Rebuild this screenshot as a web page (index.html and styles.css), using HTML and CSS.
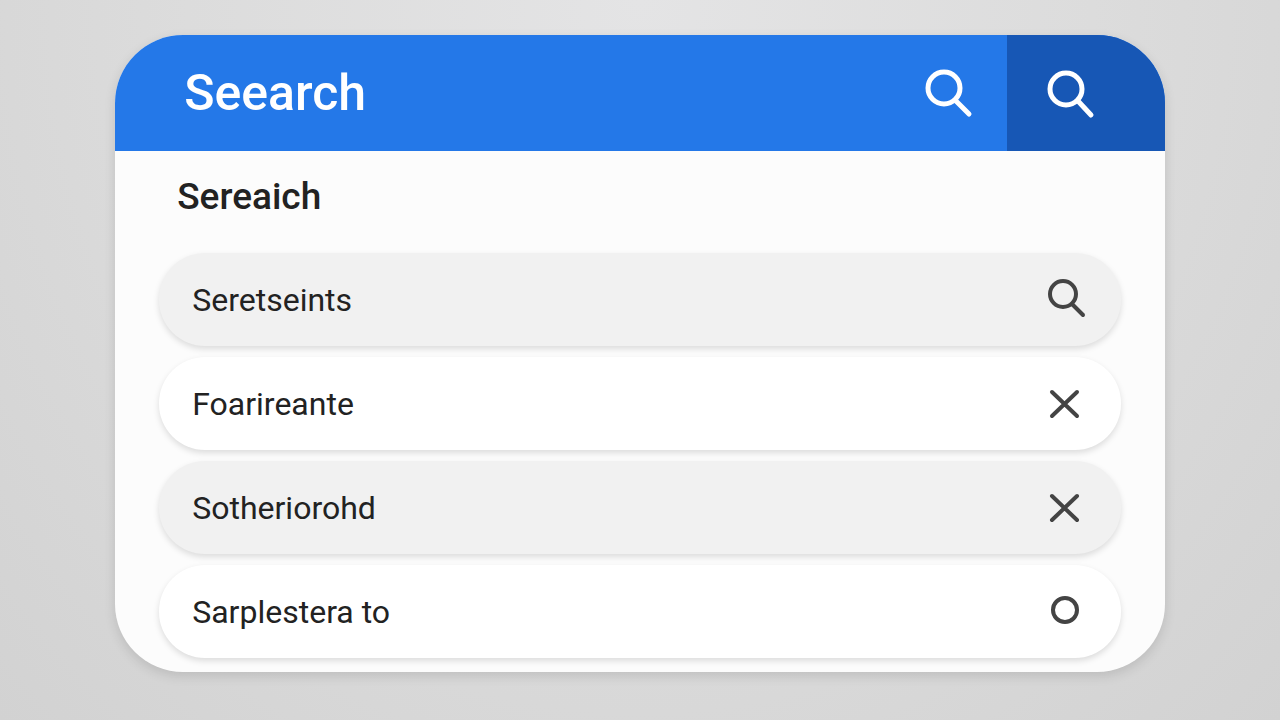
FILE: index.html
```
<!DOCTYPE html>
<html lang="en">
<head>
    <meta charset="UTF-8">
    <meta name="viewport" content="width=device-width, initial-scale=1.0">
    <title>Seearch</title>
    <link rel="stylesheet" href="styles.css">
</head>
<body>
    <main class="card">
        <header class="header">
            <h1 class="title">Seearch</h1>
            <button class="header-button" type="button" aria-label="Search">
                <svg width="48" height="48" viewBox="0 0 48 48">
                    <circle cx="20" cy="19" r="16"/>
                    <path d="M32 32L45 45"/>
                </svg>
            </button>
            <button class="header-button submit" type="button" aria-label="Submit search">
                <svg width="48" height="48" viewBox="0 0 48 48">
                    <circle cx="19" cy="20" r="16"/>
                    <path d="M31 32L44 46"/>
                </svg>
            </button>
        </header>
        <section class="content">
            <h2 class="subtitle">Sereaich</h2>
            <ul class="results">
                <li class="row shaded">
                    <span>Seretseints</span>
                    <button class="row-button" type="button" aria-label="Search Seretseints">
                        <svg width="40" height="40" viewBox="0 0 40 40">
                            <circle cx="18" cy="14" r="13"/>
                            <path d="M28 25L38 35"/>
                        </svg>
                    </button>
                </li>
                <li class="row">
                    <span>Foarireante</span>
                    <button class="row-button" type="button" aria-label="Remove Foarireante">
                        <svg width="40" height="40" viewBox="0 0 40 40">
                            <path d="M7 8L32 32M32 8L7 32"/>
                        </svg>
                    </button>
                </li>
                <li class="row shaded">
                    <span>Sotheriorohd</span>
                    <button class="row-button" type="button" aria-label="Remove Sotheriorohd">
                        <svg width="40" height="40" viewBox="0 0 40 40">
                            <path d="M7 8L32 32M32 8L7 32"/>
                        </svg>
                    </button>
                </li>
                <li class="row">
                    <span>Sarplestera to</span>
                    <button class="row-button" type="button" aria-label="Select Sarplestera to">
                        <svg width="40" height="40" viewBox="0 0 40 40">
                            <circle cx="20" cy="18" r="12"/>
                        </svg>
                    </button>
                </li>
            </ul>
        </section>
    </main>
</body>
</html>
```

FILE: styles.css
```
* {
    box-sizing: border-box;
}
body {
    font-family: Roboto, Arial, sans-serif;
    background: radial-gradient(ellipse at 50% 0%, #e4e4e5 0%, #dcdcdc 50%, #d2d2d2 100%);
    color: #222;
    min-height: 100vh;
    margin: 0;
    padding: 35px 0 48px;
}
.card {
    width: 82%;
    margin: 0 auto;
    background-color: #fcfcfc;
    border-radius: 68px;
    overflow: hidden;
    box-shadow: 0 4px 12px rgba(0, 0, 0, 0.12);
}
.header {
    display: flex;
    align-items: stretch;
    height: 116px;
    background-color: #2478e8;
    color: white;
}
.title {
    flex: 1;
    align-self: center;
    margin: 0;
    padding-left: 69px;
    font-size: 50px;
    line-height: 60px;
    font-weight: 500;
}
.header-button {
    display: flex;
    align-items: center;
    justify-content: center;
    width: 118px;
    padding: 0;
    border: none;
    background: none;
    color: white;
    cursor: pointer;
}
.header-button.submit {
    justify-content: flex-start;
    width: 158px;
    padding-left: 40px;
    background-color: #1757b5;
}
svg {
    overflow: visible;
    fill: none;
    stroke: currentColor;
    stroke-width: 4;
    stroke-linecap: round;
}
.header-button svg {
    stroke-width: 5;
}
.content {
    padding: 24px 44px 14px;
}
.subtitle {
    margin: 0 0 34px;
    padding-left: 18px;
    font-size: 37px;
    line-height: 44px;
    font-weight: 500;
}
.results {
    display: flex;
    flex-direction: column;
    gap: 11px;
    margin: 0;
    padding: 0;
    list-style: none;
}
.row {
    display: flex;
    align-items: center;
    justify-content: space-between;
    height: 93px;
    padding: 0 36px 0 33px;
    background-color: white;
    border-radius: 46px;
    font-size: 32px;
    line-height: 40px;
    box-shadow: 0 3px 6px rgba(0, 0, 0, 0.13);
}
.row.shaded {
    background-color: #f1f1f1;
}
.row-button {
    display: flex;
    padding: 0;
    border: none;
    background: none;
    color: #444;
    cursor: pointer;
}
```
